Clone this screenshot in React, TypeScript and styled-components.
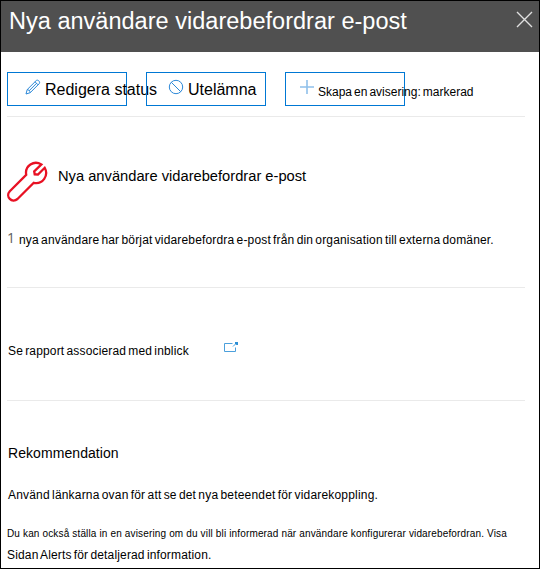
import React from "react";
import styled, { createGlobalStyle } from "styled-components";

const GlobalStyle = createGlobalStyle`
  * { box-sizing: border-box; }
  body { margin: 0; background: #fff; }
`;

const Panel = styled.main`
  display: flex;
  flex-direction: column;
  width: 540px;
  height: 569px;
  overflow: hidden;
  border: 1px solid #000;
  background: #fff;
  color: #000;
  font-family: "Liberation Sans", Arial, sans-serif;
`;

const Header = styled.header`
  display: flex;
  justify-content: space-between;
  align-items: flex-start;
  flex: none;
  height: 51px;
  padding: 5px 6px 0 8px;
  background: #505050;
  color: #fff;
`;

const Title = styled.h1`
  margin: 0;
  font-size: 23.5px;
  font-weight: 400;
  line-height: 30px;
  letter-spacing: 0.02px;
  white-space: nowrap;
`;

const CloseButton = styled.button`
  display: flex;
  margin-top: 5px;
  padding: 0;
  border: 0;
  background: none;
  color: #e0e0e0;
`;

const Content = styled.div`
  display: flex;
  flex-direction: column;
  width: 518px;
  margin: 20px 0 0 6px;
`;

const Toolbar = styled.div`
  display: flex;
  gap: 19px;
  height: 45px;
  padding-bottom: 11px;
  border-bottom: 1px solid #eaeaea;
`;

const Action = styled.button<{ $inset: number; $gap: number }>`
  display: flex;
  align-items: flex-start;
  flex: none;
  gap: ${(p) => p.$gap}px;
  width: 120px;
  height: 34px;
  padding: 6px 0 0 ${(p) => p.$inset}px;
  border: 1px solid #0078d4;
  background: none;
  color: #000;
  font-family: inherit;
  text-align: left;

  svg { flex: none; }
`;

const Text = styled.span<{
  $size: number;
  $spacing?: number;
  $words?: number;
  $drop?: number;
  $indent?: number;
}>`
  display: block;
  margin-top: ${(p) => p.$drop ?? 0}px;
  margin-left: ${(p) => p.$indent ?? 0}px;
  font-size: ${(p) => p.$size}px;
  line-height: 20px;
  letter-spacing: ${(p) => p.$spacing ?? 0}px;
  word-spacing: ${(p) => p.$words ?? 0}px;
  white-space: nowrap;
`;

const Section = styled.section<{ $height: number; $last?: boolean }>`
  display: flex;
  flex-direction: column;
  flex: none;
  height: ${(p) => p.$height}px;
  border-bottom: ${(p) => (p.$last ? "0" : "1px solid #eaeaea")};
`;

const Heading = styled.div`
  display: flex;
  gap: 10px;
  margin-top: 44px;
`;

const Summary = styled.div`
  display: flex;
  gap: 5px;
  margin-top: 26px;
`;

const Count = styled.span`
  width: 7px;
  color: #000;
  font-size: 14px;
  font-family: "Open Sans", sans-serif;
  line-height: 19px;
  opacity: 0.65;
`;

const ReportLink = styled.div`
  display: flex;
  gap: 35px;
  margin-top: 53px;

  svg { margin-top: 1px; }
`;

const CloseIcon = () => (
  <svg width="17" height="17" viewBox="0 0 17 17" fill="none" stroke="currentColor" strokeWidth="1.4">
    <path d="M1 1 16 16M16 1 1 16" />
  </svg>
);

const PencilIcon = () => (
  <svg width="16" height="16" viewBox="0 0 16 16" fill="none" stroke="#2b88d8" strokeWidth="1">
    <path d="M1 15 2.2 10.6 11.3 1.5C12.8.2 15.6 2.8 14.3 4.6L5.2 13.7ZM2.2 10.6C3.8 10.8 5 12 5.2 13.7M10 2.8 13 5.8M4 11.9 11.7 4.2" />
  </svg>
);

const BlockIcon = () => (
  <svg width="16" height="16" viewBox="0 0 16 16" fill="none" stroke="#2b88d8" strokeWidth="1">
    <circle cx="8" cy="8" r="6.7" />
    <path d="M3.3 3.3 12.7 12.7" />
  </svg>
);

const PlusIcon = () => (
  <svg width="16" height="16" viewBox="0 0 16 16" fill="none" stroke="#8fc0ea" strokeWidth="1.6">
    <path d="M1 8H15M8 1V15" />
  </svg>
);

const WrenchIcon = () => (
  <svg width="41" height="41" viewBox="0 0 41 41" fill="none" stroke="#e81123" strokeWidth="2.3" strokeLinejoin="miter">
    <path d="M34.4 3.4C27-1 17.6 4.5 19.2 13.8L2.8 30.2C-2 35.6 5 42.6 10.5 38L26.8 21.8C35.8 23.5 42 14.5 37.7 6.8L31 13.5 27.7 13.3 27.2 10.5Z" />
  </svg>
);

const OpenIcon = () => (
  <svg width="15" height="12" viewBox="0 0 15 12" fill="none" stroke="#4ba0dc" strokeWidth="1">
    <path d="M8.5 1.5H.5V9.5H11.5V5.5M9 4.5 12 1.5" />
    <path d="M11 0H14V3H12.5L11 1.5Z" fill="#2b8fd6" stroke="none" />
  </svg>
);

export default function App() {
  return (
    <>
      <GlobalStyle />
      <Panel>
        <Header>
          <Title>Nya användare vidarebefordrar e-post</Title>
          <CloseButton aria-label="Stäng"><CloseIcon /></CloseButton>
        </Header>
        <Content>
          <Toolbar>
            <Action $inset={17} $gap={4}>
              <PencilIcon />
              <Text $size={16} $drop={1}>Redigera status</Text>
            </Action>
            <Action $inset={21} $gap={4}>
              <BlockIcon />
              <Text $size={16} $drop={1}>Utelämna</Text>
            </Action>
            <Action $inset={13} $gap={3}>
              <PlusIcon />
              <Text $size={12} $drop={3} $words={-1.3}>Skapa en avisering: markerad</Text>
            </Action>
          </Toolbar>
          <Section $height={171}>
            <Heading>
              <WrenchIcon />
              <Text $size={14.7} $drop={5}>Nya användare vidarebefordrar e-post</Text>
            </Heading>
            <Summary>
              <Count>1</Count>
              <Text $size={12} $drop={2} $words={-1.3} $spacing={0.165}>
                nya användare har börjat vidarebefordra e-post från din organisation till externa domäner.
              </Text>
            </Summary>
          </Section>
          <Section $height={113}>
            <ReportLink>
              <Text $size={12} $indent={1} $words={-1.3} $spacing={0.16}>Se rapport associerad med inblick</Text>
              <OpenIcon />
            </ReportLink>
          </Section>
          <Section $height={167} $last>
            <Text $size={14} $drop={42} $indent={1} $spacing={0.07}>Rekommendation</Text>
            <Text $size={12} $drop={22} $indent={1} $words={-1.3} $spacing={0.185}>
              Använd länkarna ovan för att se det nya beteendet för vidarekoppling.
            </Text>
            <Text $size={10} $drop={19} $spacing={0.15}>
              Du kan också ställa in en avisering om du vill bli informerad när användare konfigurerar vidarebefordran. Visa
            </Text>
            <Text $size={12} $drop={1} $words={-1.3} $spacing={0.155}>Sidan Alerts för detaljerad information.</Text>
          </Section>
        </Content>
      </Panel>
    </>
  );
}
